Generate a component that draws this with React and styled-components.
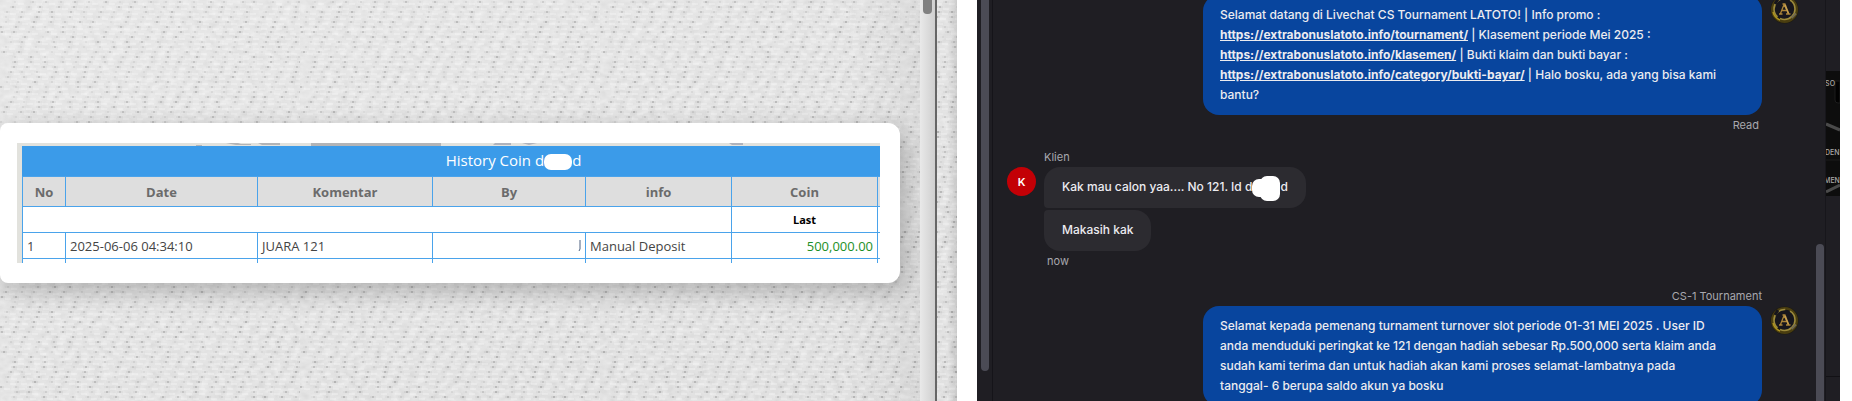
import styled, { createGlobalStyle, css } from 'styled-components'

const GlobalStyle = createGlobalStyle`
  *, *:before, *:after { box-sizing: border-box; }
  body { margin: 0; background: #fff; }
`

const colors = {
  blue: '#3b9be9',
  line: '#4aa3eb',
  head: '#dedede',
  dark: '#1f1e23',
  bubble: '#2c2b30',
  agent: '#08459e',
  muted: '#a8a8ae',
  thumb: '#4b4b55',
}

const Page = styled.main`
  display: grid;
  gap: 20px;
  grid-template-columns: minmax(0, 957fr) minmax(0, 863fr);
  height: 100vh;
  overflow: hidden;
  padding-right: 12px;
`

/* ---------- history side ---------- */

const History = styled.section`
  background: #e6e6e6;
  display: grid;
  font-family: "Open Sans", "Noto Sans", sans-serif;
  grid-template-columns: minmax(0, 1fr) 15px 2px 20px;
  isolation: isolate;
  overflow: hidden;
  position: relative;
`

const Fabric = styled.svg`
  height: 100%;
  left: 0;
  position: absolute;
  top: 0;
  width: 100%;
  z-index: -1;
`

const HistoryBody = styled.div`
  background: linear-gradient(90deg, transparent 92%, rgba(0, 0, 0, 0.04));
  padding: 123px 20px 0 0;
`

const Card = styled.div`
  background: #fff;
  border-radius: 8px 12px 12px 8px;
  box-shadow: 4px 8px 24px rgba(0, 0, 0, 0.24);
  padding: 20px 20px 20px 17px;
`

const Sheet = styled.div`
  background: #e2e2dd;
  height: 120px;
  overflow: hidden;
  padding-left: 5px;
`

const Smudges = styled.svg`
  display: block;
  height: 3px;
  width: 100%;
`

const Table = styled.table`
  background: #fff;
  border-collapse: collapse;
  color: #444;
  font-size: 13px;
  line-height: 18px;
  table-layout: fixed;
  width: 100%;

  caption {
    background: ${colors.blue};
    color: #fff;
    font-size: 15px;
    height: 30px;
    line-height: 28px;
    padding-left: 124px;
  }
`

const Th = styled.th`
  background: ${colors.head};
  border: 1px solid ${colors.line};
  color: #6b6b6b;
  height: 30px;
  padding: 0;
`

const Td = styled.td`
  border: 1px solid ${colors.line};
  height: ${props => props.$h || 26}px;
  padding: 0 4px;
  text-align: ${props => props.$align || 'left'};

  ${props => props.$money && css`color: #1d8f27;`}
  ${props => props.$last && css`
    color: #000;
    font-size: 11px;
    font-weight: 700;
  `}
`

const Redact = styled.span`
  background: #fff;
  border-radius: 7px;
  display: inline-block;
  height: 16px;
  vertical-align: middle;
  width: 28px;
`

const Track = styled.div`
  background: linear-gradient(90deg, #e9e9e9, #cfcfcf);
  display: flex;
  justify-content: center;
`

const TrackThumb = styled.div`
  background: #808080;
  border-radius: 0 0 4px 4px;
  height: 14px;
  width: 9px;
`

const Divider = styled.div`
  background: #666;
`

const Margin = styled.div`
  background: linear-gradient(90deg, transparent 50%, rgba(0, 0, 0, 0.1));
`

/* ---------- chat side ---------- */

const Chat = styled.section`
  background: ${colors.dark};
  color: #ececf0;
  display: grid;
  font-family: Inter, "Liberation Sans", sans-serif;
  font-size: 12px;
  font-weight: 500;
  grid-template-columns: 15px minmax(0, 1fr) 11px 15px;
  line-height: 20px;
  overflow: hidden;
`

const Rail = styled.div`
  display: flex;
  justify-content: ${props => props.$center ? 'center' : 'flex-start'};
  padding: ${props => props.$pad};
`

const RailThumb = styled.div`
  background: ${colors.thumb};
  border-radius: ${props => props.$end === 'top' ? '4px 4px 0 0' : '0 0 4px 4px'};
  height: 100%;
  width: 8px;
`

const Thread = styled.div`
  border-left: 1px solid #151419;
  display: flex;
  flex-direction: column;
  margin-top: -5px;
  padding: 0 15px 0 14px;
`

const Message = styled.div`
  display: grid;
  column-gap: 8px;
  grid-template-columns: 29px minmax(0, 1fr) 29px;
  margin-bottom: ${props => props.$gap || 0}px;
`

const Stack = styled.div`
  align-items: ${props => props.$mine ? 'flex-end' : 'flex-start'};
  display: flex;
  flex-direction: column;
  gap: 2px;
  grid-column: 2;
`

const Meta = styled.div`
  color: ${colors.muted};
  font-size: 11px;
  font-weight: 400;
  grid-column: 2;
  line-height: 20px;
  padding: 0 ${props => props.$pad || 0}px;
  text-align: ${props => props.$mine ? 'right' : 'left'};
`

const Bubble = styled.div`
  background: ${props => props.$mine ? colors.agent : colors.bubble};
  border-radius: ${props => props.$radius || '16px'};
  padding: ${props => props.$mine ? '10px 24px 10px 17px' : '10px 18px 11px'};
  ${props => props.$mine && css`width: 559px;`}
  max-width: 100%;

  a {
    color: inherit;
    font-weight: 700;
  }
`

const Initial = styled.div`
  align-items: center;
  background: #c30006;
  border-radius: 50%;
  color: #fff;
  display: flex;
  font-size: 11px;
  font-weight: 600;
  grid-column: 1;
  height: 29px;
  justify-content: center;
`

const ChatRedact = styled.span`
  background: #fff;
  border-radius: 7px;
  display: inline-block;
  height: 18px;
  margin: -4px 0;
  position: relative;
  vertical-align: middle;
  width: 28px;

  &:after {
    background: #fff;
    border-radius: 7px;
    bottom: -4px;
    content: "";
    position: absolute;
    right: 0;
    top: -3px;
    width: 20px;
  }
`

const Side = styled.div`
  border-left: 1px solid #17161b;
  display: flex;
  flex-direction: column;
  padding-top: 71px;
`

const SideArt = styled.svg`
  display: block;
  flex: none;
  height: 125px;
  width: 14px;
`

const SideRest = styled.div`
  border-bottom: 1px solid #121115;
  height: 181px;
`

const Emblem = styled.svg`
  grid-column: 3;
  height: 29px;
  width: 29px;
`

// woven dots, seeded so that the cloth is the same on each load
const weave = () => {
  const dots = []
  let seed = 11
  const rand = () => {
    seed = (seed * 16807) % 2147483647
    return seed / 2147483647
  }
  for (let row = 0; row < 60; row++) {
    for (let col = 0; col < 20; col++) {
      dots.push({
        x: (col * 15 + (row % 2) * 7 + (row % 3) * 4 + Math.floor(rand() * 5) + 298) % 300,
        y: row * 5 + 1,
        o: 0.05 + rand() * 0.15,
      })
    }
  }
  return dots
}

const DOTS = weave()

const Cloth = () =>
  <Fabric aria-hidden="true">
    <defs>
      <filter id="fibre" x="0" y="0" width="100%" height="100%">
        <feTurbulence type="fractalNoise" baseFrequency="0.12 0.18" numOctaves="2" seed="4" />
        <feColorMatrix values="0 0 0 0 0  0 0 0 0 0  0 0 0 0 0  0.3 0 0 0 -0.06" />
      </filter>
      <pattern id="weave" width="300" height="300" patternUnits="userSpaceOnUse">
        {DOTS.map((d, i) =>
          <g key={i}>
            <rect x={d.x - 2} y={d.y} width="6" height="2" fill="#000" opacity={d.o / 3} />
            <rect x={d.x} y={d.y} width="2" height="2" fill="#000" opacity={d.o} />
            <rect x={d.x + 4} y={d.y + 2} width="6" height="2" fill="#fff" opacity="0.25" />
          </g>
        )}
      </pattern>
      <linearGradient id="shade" x1="0" y1="0" x2="1" y2="1">
        <stop offset="0" stopColor="#fff" stopOpacity="0.3" />
        <stop offset="1" stopColor="#fff" stopOpacity="0.1" />
      </linearGradient>
    </defs>
    <rect width="100%" height="100%" filter="url(#fibre)" opacity="0.4" />
    <rect width="100%" height="100%" fill="url(#weave)" />
    <rect width="100%" height="100%" fill="url(#shade)" />
  </Fabric>

const Avatar = () =>
  <Emblem viewBox="0 0 29 29" role="img" aria-label="CS">
    <circle cx="14.5" cy="14.5" r="14" fill="#1d1b12" />
    <circle cx="14.5" cy="14.5" r="12" fill="none" stroke="#4a3e10" strokeWidth="3" />
    <circle cx="14.5" cy="14" r="10.5" fill="#17161c" stroke="#9c8a3c" strokeWidth="1.6" strokeDasharray="21 3 26 5" />
    <path d="M3 17 A12 12 0 0 0 10 25" fill="none" stroke="#b09520" strokeWidth="1.4" />
    <path d="M5 9 L8 4" stroke="#17161c" strokeWidth="3" />
    <path d="M21.5 23 L26 18.5" stroke="#6f6850" strokeWidth="2" />
    <path d="M10.5 18.5 L14 9.5 L18.5 18.5 M12.5 9 H15.5 M12 15.5 H17 M9 19 H12.5 M16 19 H20.5" fill="none" stroke="#a98338" strokeWidth="1.3" />
    <path d="M15 9.5 L18.5 18.5" stroke="#c79f50" strokeWidth="1.6" />
  </Emblem>

const HEADS = ['No', 'Date', 'Komentar', 'By', 'info', 'Coin', '']
const COLS = [43, 192, 175, 153, 146, 146, 3]

const HistoryTable = () =>
  <Table>
    <caption>History Coin d<Redact />d</caption>
    <colgroup>
      {COLS.map((w, i) => <col key={i} width={w} />)}
    </colgroup>
    <thead>
      <tr>
        {HEADS.map((h, i) => <Th key={i}>{h}</Th>)}
      </tr>
    </thead>
    <tbody>
      <tr>
        <Td colSpan={5} />
        <Td $align="center" $last>Last</Td>
        <Td />
      </tr>
      <tr>
        <Td>1</Td>
        <Td>2025-06-06 04:34:10</Td>
        <Td>JUARA 121</Td>
        <Td $align="right">
          <svg width="3" height="11" viewBox="0 0 3 11" aria-hidden="true">
            <path d="M2 0 V9 L1 11" fill="none" stroke="#4d6180" />
          </svg>
        </Td>
        <Td>Manual Deposit</Td>
        <Td $align="right" $money>500,000.00</Td>
        <Td />
      </tr>
      <tr>
        {COLS.map((w, i) => <Td key={i} $h={8} />)}
      </tr>
    </tbody>
  </Table>

export default function App() {
  return (
    <Page>
      <GlobalStyle />
      <History>
        <Cloth />
        <HistoryBody>
          <Card>
            <Sheet>
              <Smudges viewBox="0 0 858 3" preserveAspectRatio="none" aria-hidden="true">
                <path d="M174 2 h6 v1 h-6z M204 0 h12 l3 1 h10 v1 h-15z M236 0 h22 v2 h-18z M289 0 h130 v3 h-130z" fill="#b3b4b6" />
                <path d="M473 0 h16 v2 h-18z M500 0 h15 l-8 2z M707 0 h14 v2 h-11z" fill="#b0b3bc" />
              </Smudges>
              <HistoryTable />
            </Sheet>
          </Card>
        </HistoryBody>
        <Track><TrackThumb /></Track>
        <Divider />
        <Margin />
      </History>

      <Chat>
        <Rail $pad="0 0 35px 4px"><RailThumb /></Rail>
        <Thread>
          <Message $gap={12}>
            <Stack $mine>
              <Bubble $mine>
                Selamat datang di Livechat CS Tournament LATOTO! | Info promo :<br />
                <a href="https://extrabonuslatoto.info/tournament/">https://extrabonuslatoto.info/tournament/</a> | Klasement periode Mei 2025 :<br />
                <a href="https://extrabonuslatoto.info/klasemen/">https://extrabonuslatoto.info/klasemen/</a> | Bukti klaim dan bukti bayar :<br />
                <a href="https://extrabonuslatoto.info/category/bukti-bayar/">https://extrabonuslatoto.info/category/bukti-bayar/</a> | Halo bosku, ada yang bisa kami bantu?
              </Bubble>
            </Stack>
            <Avatar />
            <Meta $mine $pad={3}>Read</Meta>
          </Message>

          <Message $gap={15}>
            <Meta>Klien</Meta>
            <Initial>K</Initial>
            <Stack>
              <Bubble $radius="16px 16px 16px 4px">
                Kak mau calon yaa.... No 121. Id d<ChatRedact />d
              </Bubble>
              <Bubble $radius="4px 16px 16px 16px">Makasih kak</Bubble>
            </Stack>
            <Meta $pad={3}>now</Meta>
          </Message>

          <Message>
            <Meta $mine>CS-1 Tournament</Meta>
            <Stack $mine>
              <Bubble $mine>
                Selamat kepada pemenang turnament turnover slot periode 01-31 MEI 2025 . User ID<br />
                anda menduduki peringkat ke 121 dengan hadiah sebesar Rp.500,000 serta klaim anda<br />
                sudah kami terima dan untuk hadiah akan kami proses selamat-lambatnya pada<br />
                tanggal- 6 berupa saldo akun ya bosku
              </Bubble>
            </Stack>
            <Avatar />
          </Message>
        </Thread>
        <Rail $center $pad="244px 0 0"><RailThumb $end="top" /></Rail>
        <Side>
          <SideArt viewBox="0 0 14 125" aria-hidden="true">
            <rect width="14" height="125" fill="#0d0d0d" />
            <path d="M9 10 H14 V32 H12 Q9 32 9 29z" fill="#020202" stroke="#1c1c1c" />
            <path d="M0 53 L14 59 M0 121 L14 114" stroke="#4a4a4a" strokeWidth="3" />
            <path d="M0 89 H14" stroke="#1c1c1c" />
            <g fill="#aaa" fontSize="7" fontWeight="500" fontFamily="Inter, sans-serif">
              <text x="9" y="15" textAnchor="end">SO</text>
              <text x="-1" y="84">DEN</text>
              <text x="-2" y="112">MEN</text>
            </g>
          </SideArt>
          <SideRest />
        </Side>
      </Chat>
    </Page>
  )
}
